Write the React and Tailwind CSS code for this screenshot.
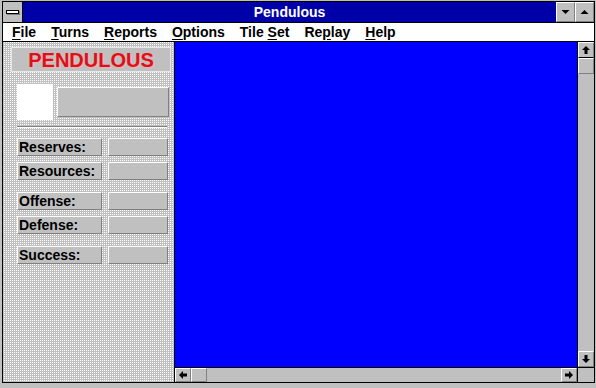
import React from "react";

const menus = [
  { key: "F", rest: "ile" },
  { key: "T", rest: "urns" },
  { key: "R", rest: "eports" },
  { key: "O", rest: "ptions" },
  { pre: "Tile ", key: "S", rest: "et" },
  { pre: "Re", key: "p", rest: "lay" },
  { key: "H", rest: "elp" },
];

const stats = [
  { label: "Reserves:", gap: false },
  { label: "Resources:", gap: false },
  { label: "Offense:", gap: true },
  { label: "Defense:", gap: false },
  { label: "Success:", gap: true },
];

// raised 3d gray box, windows 3.1 style
const bevel = "bg-[#c0c0c0] border-t border-l border-t-white border-l-white border-b border-r border-b-[#808080] border-r-[#808080]";

function Arrow({ dir, big }) {
  // small scroll arrows with a stem, or plain triangles for title buttons
  const paths = {
    up: "M4 0 L8 4 L5.5 4 L5.5 8 L2.5 8 L2.5 4 L0 4 Z",
    down: "M4 8 L8 4 L5.5 4 L5.5 0 L2.5 0 L2.5 4 L0 4 Z",
    left: "M0 4 L4 0 L4 2.5 L8 2.5 L8 5.5 L4 5.5 L4 8 Z",
    right: "M8 4 L4 0 L4 2.5 L0 2.5 L0 5.5 L4 5.5 L4 8 Z",
    tup: "M0 6 L4 2 L8 6 Z",
    tdown: "M0 2 L4 6 L8 2 Z",
  };
  return (
    <svg width={big ? 9 : 8} height={8} viewBox="0 0 8 8">
      <path d={paths[dir]} fill="#000" />
    </svg>
  );
}

function ScrollBtn({ dir, className = "" }) {
  return (
    <div className={`flex items-center justify-center ${bevel} ${className}`}>
      <Arrow dir={dir} />
    </div>
  );
}

export default function App() {
  return (
    <div
      className="w-[596px] h-[388px] bg-[#c0c0c0] pt-[1px] pl-[2px] pr-[1px] pb-[5px] flex overflow-hidden"
      style={{ fontFamily: '"Liberation Sans", Arial, sans-serif' }}
    >
      <div className="flex-1 flex flex-col border border-black min-w-0">
        {/* title bar */}
        <div className="h-[21px] flex border-b border-black">
          <div className="w-[20px] bg-[#c0c0c0] border-r border-black flex items-center justify-center">
            <div className="w-[13px] h-[4px] bg-white border border-black shadow-[1px_1px_0_#808080]" />
          </div>
          <div className="flex-1 bg-[#0000a8] flex items-center justify-center text-white font-bold text-[14px]">
            Pendulous
          </div>
          <div className={`w-[19px] border-l border-black flex items-center justify-center ${bevel}`}>
            <Arrow dir="tdown" big />
          </div>
          <div className={`w-[19px] border-l border-black flex items-center justify-center ${bevel}`}>
            <Arrow dir="tup" big />
          </div>
        </div>

        {/* menu bar */}
        <div className="h-[19px] bg-white border-b border-black flex items-center gap-[15px] pl-[9px] text-[14px] font-bold text-black">
          {menus.map((m, i) => (
            <span key={i} className="leading-none">
              {m.pre}
              <span className="underline underline-offset-[2px]">{m.key}</span>
              {m.rest}
            </span>
          ))}
        </div>

        {/* body */}
        <div className="flex-1 flex min-h-0">
          {/* side panel */}
          <div className="w-[172px] border-r border-black bg-[conic-gradient(#ffffff_0%_25%,#c0c0c0_0%_100%)] bg-[length:2px_2px] pl-[3px] pt-[5px]">
            <div className="ml-[5px] w-[160px] h-[25px] bg-[#c0c0c0] border border-[#e8e8e8] flex items-center justify-center">
              <span
                className="text-[20px] font-bold text-[#e0101a] leading-none"
                style={{ textShadow: "1px 1px 0 #f0b0b0" }}
              >
                PENDULOUS
              </span>
            </div>
            <div className="ml-[11px] mt-[12px] flex items-center gap-[4px]">
              <div className="w-[36px] h-[36px] bg-white" />
              <div className={`w-[112px] h-[30px] ${bevel}`} />
            </div>
            <div className="ml-[11px] mt-[6px] w-[150px] h-[2px] border-t border-[#808080] border-b border-b-white" />
            <div className="ml-[11px] mt-[10px] flex flex-col">
              {stats.map((s, i) => (
                <div key={i} className={`flex gap-[6px] ${i === 0 ? "" : s.gap ? "mt-[12px]" : "mt-[6px]"}`}>
                  <div className={`w-[85px] h-[18px] flex items-center pl-[1px] text-[14px] font-bold text-black leading-none ${bevel}`}>
                    {s.label}
                  </div>
                  <div className={`w-[60px] h-[18px] ${bevel}`} />
                </div>
              ))}
            </div>
          </div>

          {/* main view + scrollbars */}
          <div className="flex-1 flex flex-col min-w-0">
            <div className="flex-1 flex min-h-0">
              <div className="flex-1 bg-[#0000ff]" />
              <div className="w-[17px] border-l border-black bg-[#c0c0c0] flex flex-col">
                <ScrollBtn dir="up" className="h-[16px] border-b-black" />
                <div className={`h-[16px] ${bevel}`} />
                <div className="flex-1" />
                <ScrollBtn dir="down" className="h-[16px]" />
              </div>
            </div>
            <div className="h-[15px] flex border-t border-black">
              <div className="flex-1 bg-[#c0c0c0] flex">
                <ScrollBtn dir="left" className="w-[16px]" />
                <div className={`w-[16px] ${bevel}`} />
                <div className="flex-1" />
                <ScrollBtn dir="right" className="w-[16px]" />
              </div>
              <div className="w-[17px] border-l border-black bg-[#c0c0c0]" />
            </div>
          </div>
        </div>
      </div>
    </div>
  );
}
